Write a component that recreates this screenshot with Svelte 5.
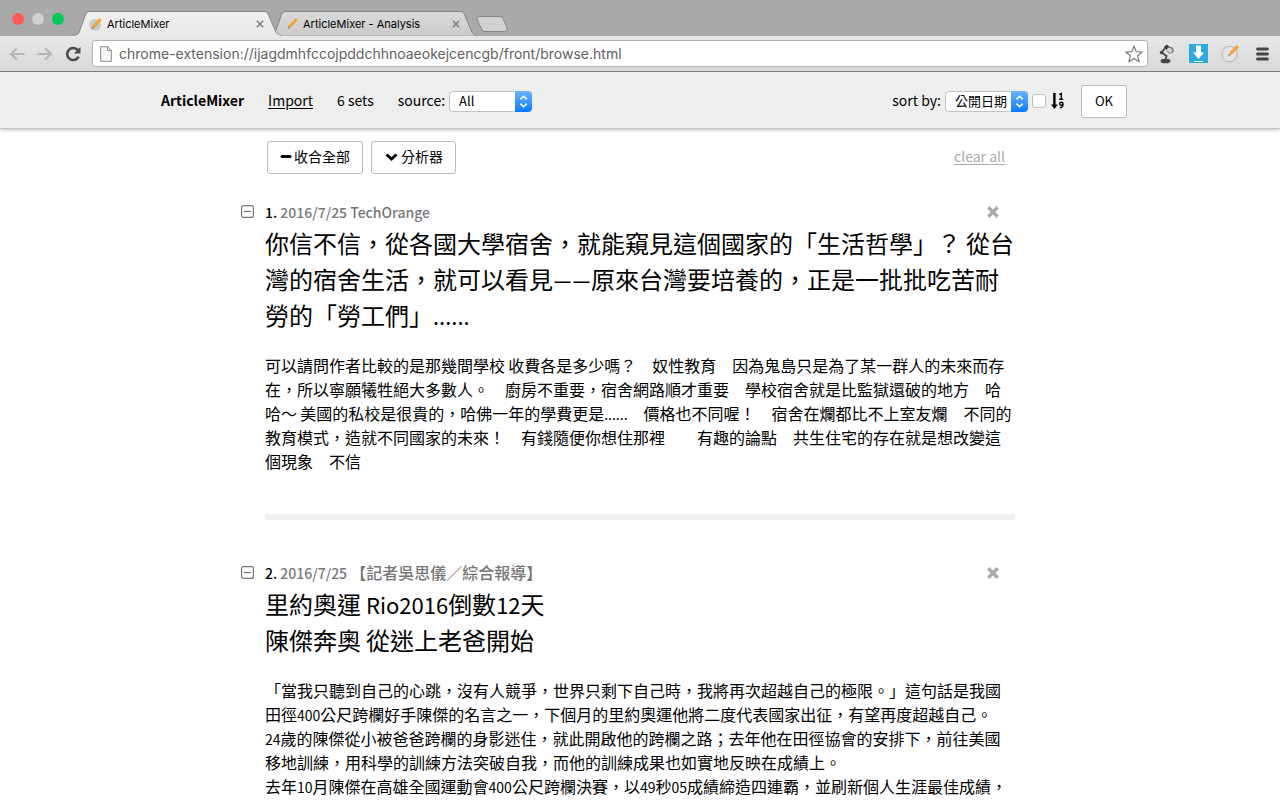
<script>
  const tabs = [
    { title: 'ArticleMixer', active: true },
    { title: 'ArticleMixer - Analysis', active: false }
  ];

  const articles = [
    {
      id: 1,
      date: '2016/7/25',
      source: 'TechOrange',
      title:
        '你信不信，從各國大學宿舍，就能窺見這個國家的「生活哲學」？ 從台灣的宿舍生活，就可以看見——原來台灣要培養的，正是一批批吃苦耐勞的「勞工們」......',
      body:
        '可以請問作者比較的是那幾間學校 收費各是多少嗎？　奴性教育　因為鬼島只是為了某一群人的未來而存在，所以寧願犧牲絕大多數人。　廚房不重要，宿舍網路順才重要　學校宿舍就是比監獄還破的地方　哈哈～ 美國的私校是很貴的，哈佛一年的學費更是......　價格也不同喔！　宿舍在爛都比不上室友爛　不同的教育模式，造就不同國家的未來！　有錢隨便你想住那裡　　有趣的論點　共生住宅的存在就是想改變這個現象　不信'
    },
    {
      id: 2,
      date: '2016/7/25',
      source: '【記者吳思儀／綜合報導】',
      title: '里約奧運 Rio2016倒數12天\n陳傑奔奧 從迷上老爸開始',
      body:
        '「當我只聽到自己的心跳，沒有人競爭，世界只剩下自己時，我將再次超越自己的極限。」這句話是我國田徑400公尺跨欄好手陳傑的名言之一，下個月的里約奧運他將二度代表國家出征，有望再度超越自己。\n24歲的陳傑從小被爸爸跨欄的身影迷住，就此開啟他的跨欄之路；去年他在田徑協會的安排下，前往美國移地訓練，用科學的訓練方法突破自我，而他的訓練成果也如實地反映在成績上。\n去年10月陳傑在高雄全國運動會400公尺跨欄決賽，以49秒05成績締造四連霸，並刷新個人生涯最佳成績，'
    }
  ];

  // Latin runs and dashes are set apart so that they sit well beside the Chinese glyphs.
  const runs = (text) =>
    text
      .split(/([\x20-\x7e]+|—+)/)
      .filter(Boolean)
      .map((t) => ({ t, kind: /^—/.test(t) ? 'dash' : /^[\x20-\x7e]/.test(t) ? 'latin' : '' }));
</script>

{#snippet mixed(text)}{#each runs(text) as r}{#if r.kind}<span class={r.kind}>{r.t}</span>{:else}{r.t}{/if}{/each}{/snippet}

{#snippet pencil(disc)}
  <svg class="fav" viewBox="0 0 16 16" aria-hidden="true">
    {#if disc}<circle cx="7" cy="9" r="6" fill="#c9c9c9" />{/if}
    <path d="M5 11.3 12.6 3.2" stroke="#f9a12e" stroke-width="3" />
    <path d="m3.6 12.8.7-2.6 2 1.9z" fill="#8b8b8b" />
  </svg>
{/snippet}

{#snippet stepper()}
  <svg class="stepper" viewBox="0 0 17 21" aria-hidden="true">
    <path d="M0 0h13a4 4 0 0 1 4 4v13a4 4 0 0 1-4 4H0z" fill="url(#blue)" />
    <path d="m5.3 8.4 3.2-3.2 3.2 3.2M5.3 12.6l3.2 3.2 3.2-3.2" fill="none" stroke="#fff" stroke-width="1.5" />
  </svg>
{/snippet}

<div class="window">
  <svg class="defs" width="0" height="0" aria-hidden="true">
    <defs>
      <linearGradient id="blue" x1="0" y1="0" x2="0" y2="1"><stop offset="0" stop-color="#6cb3fa" /><stop offset="1" stop-color="#0a7bff" /></linearGradient>
      <linearGradient id="tabOn" x1="0" y1="0" x2="0" y2="1"><stop offset="0" stop-color="#f0f0f0" /><stop offset="1" stop-color="#e8e8e8" /></linearGradient>
      <linearGradient id="tabOff" x1="0" y1="0" x2="0" y2="1"><stop offset="0" stop-color="#dadada" /><stop offset="1" stop-color="#cbcbcb" /></linearGradient>
    </defs>
  </svg>

  <div class="tabstrip">
    <div class="lights"><i class="red"></i><i class="grey"></i><i class="green"></i></div>
    {#each tabs as tab}
      <div class="tab" class:active={tab.active}>
        <svg class="shape" viewBox="0 0 206 25" preserveAspectRatio="none" aria-hidden="true">
          <path
            d="M0 24.5C3 24 4 22 5 19L10 5C11 2 12 .5 15 .5H189C192 .5 193 2 194 5L200 19C201 22 203 24 206 24.5"
            fill={tab.active ? 'url(#tabOn)' : 'url(#tabOff)'}
            stroke="#858585"
          />
          {#if tab.active}<path d="M1 24.5H205" stroke="#e8e8e8" />{/if}
        </svg>
        {@render pencil(tab.active)}
        <span class="tabname">{tab.title}</span>
        <button class="tabclose" aria-label="Close tab">
          <svg viewBox="0 0 8 8"><path d="m.8.8 6.4 6.4M7.2.8.8 7.2" stroke="#777" stroke-width="1.4" /></svg>
        </button>
      </div>
    {/each}
    <button class="newtab" aria-label="New tab">
      <svg viewBox="0 0 32 16"><path d="M3 .5H24Q26.500.5 27.500 3L31 12.500Q32 15.500 29 15.500H9Q6.500 15.500 5.500 13L1 3Q0 .5 3 .5z" fill="#d2d2d2" stroke="#858585" /></svg>
    </button>
  </div>

  <div class="toolbar">
    <button aria-label="Back"><svg width="16" height="14" viewBox="0 0 16 14"><path d="M15.500 7H2M8 1.200 2 7l6 5.800" fill="none" stroke="#b5b5b5" stroke-width="2.200" /></svg></button>
    <button aria-label="Forward"><svg width="16" height="14" viewBox="0 0 16 14"><path d="M.5 7H14M8 1.200 14 7l-6 5.800" fill="none" stroke="#b5b5b5" stroke-width="2.200" /></svg></button>
    <button aria-label="Reload">
      <svg width="16" height="16" viewBox="0 0 16 16"><path d="M12.800 4.200A6 6 0 1 0 13.600 10.600" fill="none" stroke="#4c4c4c" stroke-width="2.600" /><path d="M15.500.8V7.500H8.800z" fill="#4c4c4c" /></svg>
    </button>
    <div class="omnibox">
      <svg width="12" height="16" viewBox="0 0 12 16" aria-hidden="true"><path d="M.7.700H7.500L11.300 4.500V15.300H.7z" fill="#f6f6f6" stroke="#8a8a8a" /><path d="M7.500.700V4.500H11.300" fill="none" stroke="#8a8a8a" /></svg>
      <input class="url" aria-label="Address" value="chrome-extension://ijagdmhfccojpddchhnoaeokejcencgb/front/browse.html" />
      <button aria-label="Bookmark"><svg width="18" height="18" viewBox="0 0 18 18"><path d="m9 1 2.200 5.600 6 .4-4.600 3.800 1.500 5.900L9 13.400l-5.100 3.300 1.500-5.900L.8 7l6-.4z" fill="#fff" stroke="#7a7a7a" stroke-width="1.200" stroke-linejoin="round" /></svg></button>
    </div>
    <div class="extensions">
      <button aria-label="Lamp">
        <svg width="18" height="20" viewBox="0 0 18 20"><ellipse cx="7.500" cy="17" rx="5" ry="2.300" fill="#444" /><path d="M7.500 16 8.500 12 3.500 8.500 8 3" fill="none" stroke="#555" stroke-width="2" /><circle cx="3.500" cy="8.500" r="1.700" fill="#444" /><path d="M6 2.500 9 .8l3 2c3 .3 4.500 2.500 3.500 5-1 1.800-3.500 2.200-5.500.7C8 6.500 8.500 5 7 4.500z" fill="#777" /><ellipse cx="11.500" cy="6" rx="3.200" ry="2" transform="rotate(35 11.500 6)" fill="#d5d5d5" /><path d="m6 3 3-2.400L11 3 8.500 5.500z" fill="#3d3d3d" /></svg>
      </button>
      <button aria-label="Download">
        <svg width="19" height="19" viewBox="0 0 19 19"><path d="M0 0h19v19H0z" fill="#2ea9de" /><path d="M7 1.500h5v7H15L9.500 15 4 8.500h3z" fill="#fff" /><path d="M5 17.500h9" stroke="#fff" /></svg>
      </button>
      <button aria-label="ArticleMixer">
        <svg width="19" height="19" viewBox="0 0 19 19"><circle cx="8.500" cy="10" r="7.800" fill="#e4e4e4" stroke="#b0b0b0" /><path d="m9 10 8.100-8" stroke="#f9a343" stroke-width="3.200" /><path d="m6.600 12.500 1.300-3.200 2 1.800z" fill="#999" /></svg>
      </button>
      <button class="menu" aria-label="Menu"><svg width="13" height="14" viewBox="0 0 13 14"><path d="M1.700 2h9.600M1.700 7h9.600M1.700 12h9.600" stroke="#444" stroke-width="3.200" stroke-linecap="round" /></svg></button>
    </div>
  </div>

  <div class="page">
    <header>
      <div class="bar">
        <strong>ArticleMixer</strong>
        <a class="import" href="#import">Import</a>
        <span>6 sets</span>
        <div class="field">
          <label for="source">source:</label>
          <span class="pick"><select id="source"><option>All</option></select>{@render stepper()}</span>
        </div>
        <div class="field sort">
          <label for="sort">sort by:</label>
          <span class="pick"><select id="sort"><option>公開日期</option></select>{@render stepper()}</span>
          <span class="order">
            <input type="checkbox" aria-label="Ascending" />
            <svg width="14" height="18" viewBox="0 0 14 18" aria-hidden="true">
              <path d="M2.200 1h2.400v11.500h2.200L3.400 17 0 12.500h2.200z" />
              <path d="M8.300 2.600 10.300 1.500V7M8.200 7.200h4" fill="none" stroke="#000" stroke-width="1.400" />
              <path d="M12 11.700a1.700 1.500 0 1 1-3.400 0 1.700 1.500 0 0 1 3.400 0q.4 3.800-3.200 4" fill="none" stroke="#000" stroke-width="1.400" />
            </svg>
          </span>
        </div>
        <button class="btn">OK</button>
      </div>
    </header>

    <main>
      <div class="actions">
        <button class="btn"><svg width="12" height="12" viewBox="0 0 12 12" aria-hidden="true"><path d="M2 6.500h8" stroke="#000" stroke-width="3" stroke-linecap="round" /></svg>收合全部</button>
        <button class="btn"><svg width="15" height="12" viewBox="0 0 15 12" aria-hidden="true"><path d="m2.500 4.500 5 4.500 5-4.500" fill="none" stroke="#000" stroke-width="3" /></svg>分析器</button>
        <a class="clear" href="#clear">clear all</a>
      </div>

      {#each articles as a}
        <article>
          <div class="meta">
            <button class="fold" aria-label="Collapse">
              <svg width="13" height="13" viewBox="0 0 13 13"><rect x=".6" y=".6" width="11.800" height="11.800" rx="2" fill="none" stroke="#777" stroke-width="1.200" /><path d="M3 6.500h7" stroke="#777" stroke-width="1.200" /></svg>
            </button>
            <p><span class="latin num">{a.id}.</span>{@render mixed(' ' + a.date + ' ' + a.source)}</p>
            <button class="remove" aria-label="Remove">
              <svg width="12" height="14" viewBox="0 0 12 14"><path d="m2.500 4.500 7 7M9.500 4.500l-7 7" stroke="#aaa" stroke-width="3.400" stroke-linecap="square" /></svg>
            </button>
          </div>
          <h2>{@render mixed(a.title)}</h2>
          <p class="body">{@render mixed(a.body)}</p>
        </article>
      {/each}
    </main>
  </div>
</div>

<style>
  :global(body) {
    margin: 0;
    background: #fff;
  }
  .window {
    height: 100vh;
    display: flex;
    flex-direction: column;
    overflow: hidden;
    color: #000;
    font-family: 'Noto Sans CJK TC', sans-serif;
    font-size: 14px;
    text-spacing-trim: space-all;
  }
  .defs {
    position: absolute;
  }
  svg {
    display: block;
    flex: none;
  }
  button {
    padding: 0;
    border: 0;
    background: none;
    font: inherit;
    color: inherit;
  }
  p,
  h2 {
    margin: 0;
  }

  .tabstrip {
    flex: none;
    height: 36px;
    box-sizing: border-box;
    display: flex;
    align-items: flex-end;
    background: #a9a9a9;
    font-family: Inter, sans-serif;
    font-size: 11px;
  }
  .lights {
    display: flex;
    gap: 8px;
    padding: 0 11px 11px 12px;
  }
  .lights i {
    width: 12px;
    height: 12px;
    border-radius: 50%;
  }
  .red {
    background: #fc5b57;
  }
  .grey {
    background: #d0d0d0;
  }
  .green {
    background: #00c956;
  }
  .tab {
    position: relative;
    width: 206px;
    height: 25px;
    box-sizing: border-box;
    display: flex;
    align-items: center;
    padding: 0 17px 0 13px;
    margin-right: -10px;
  }
  .tab.active {
    z-index: 1;
  }
  .shape {
    position: absolute;
    inset: 0;
    width: 100%;
    height: 100%;
  }
  .fav {
    position: relative;
    width: 16px;
    height: 16px;
    margin-right: 3px;
  }
  .tabname {
    position: relative;
    flex: 1;
    white-space: nowrap;
  }
  .tabclose {
    position: relative;
  }
  .tabclose svg {
    width: 8px;
    height: 8px;
  }
  .newtab {
    margin: 0 0 4px 9px;
  }
  .newtab svg {
    width: 32px;
    height: 16px;
  }

  .toolbar {
    flex: none;
    height: 36px;
    box-sizing: border-box;
    display: flex;
    align-items: center;
    gap: 12px;
    padding: 0 11px 0 9px;
    background: linear-gradient(#e8e8e8, #d8d8d8);
    border-bottom: 1px solid #7b7b7b;
  }
  .omnibox {
    flex: 1;
    height: 27px;
    box-sizing: border-box;
    display: flex;
    align-items: center;
    gap: 7px;
    padding: 0 4px 0 7px;
    background: #fff;
    border: 1px solid #b4b4b4;
    border-radius: 3px;
    margin-left: -1px;
  }
  .url {
    flex: 1;
    min-width: 0;
    padding: 0;
    border: 0;
    outline: 0;
    background: none;
    color: #5f5f5f;
    font-family: Inter, sans-serif;
    font-size: 14px;
  }
  .extensions {
    display: flex;
    align-items: center;
    gap: 13px;
    margin-left: -2px;
  }
  .menu {
    margin-left: 3px;
  }

  .page {
    flex: 1;
    min-height: 0;
    overflow-y: auto;
    scrollbar-width: none;
  }
  header {
    background: #eee;
    border-bottom: 1px solid #c4c4c4;
    box-shadow: 0 1px 4px rgba(0, 0, 0, 0.25);
  }
  .bar {
    max-width: 974px;
    height: 56px;
    margin: 0 auto;
    padding: 2px 0 0 8px;
    box-sizing: border-box;
    display: flex;
    align-items: center;
    gap: 24px;
    line-height: 20px;
  }
  .bar > strong,
  .bar > a,
  .bar > span,
  .field > label {
    padding-bottom: 2px;
  }
  a {
    color: inherit;
    text-underline-offset: 2px;
  }
  .field {
    display: flex;
    align-items: center;
    gap: 4px;
  }
  .sort {
    margin-left: auto;
  }
  .bar .btn {
    margin-left: -8px;
    padding: 0 13px;
    font-size: 13px;
  }
  .pick {
    position: relative;
    display: inline-flex;
  }
  .pick select {
    appearance: none;
    width: 83px;
    height: 21px;
    padding: 0 20px 0 9px;
    border: 1px solid #c2c2c2;
    border-radius: 4px;
    background: #fff;
    color: #000;
    font-family: inherit;
    font-size: 13px;
    line-height: 18px;
  }
  .stepper {
    position: absolute;
    top: 0;
    right: 0;
    width: 17px;
    height: 21px;
    pointer-events: none;
  }
  .order {
    display: flex;
    align-items: center;
    gap: 5px;
  }
  .order input {
    appearance: none;
    width: 14px;
    height: 14px;
    margin: 0;
    border: 1px solid #bbb;
    border-radius: 3px;
    background: #fff;
  }
  .btn {
    height: 33px;
    display: flex;
    align-items: center;
    gap: 2px;
    padding: 0 12px 3px;
    border: 1px solid #bbb;
    border-radius: 3px;
    background: #fff;
    font-size: 14px;
  }

  main {
    max-width: 750px;
    margin: 0 auto;
    padding: 12px 24px 0;
  }
  .actions {
    display: flex;
    align-items: center;
    gap: 8px;
    padding: 0 10px 0 2px;
    margin-bottom: 25px;
  }
  .clear {
    margin-left: auto;
    padding-bottom: 3px;
    color: #aaa;
  }
  article + article {
    margin-top: 41px;
    padding-top: 40px;
    border-top: 6px solid #eee;
  }
  .meta {
    display: flex;
    align-items: center;
    margin-left: -24px;
    padding-right: 16px;
    margin-bottom: 2px;
    font-size: 16px;
    line-height: 24px;
    font-weight: 500;
    color: #777;
  }
  .meta p {
    flex: 1;
  }
  .fold {
    width: 24px;
  }
  .latin {
    font-size: 14px;
    line-height: 1;
  }
  .num {
    color: #000;
  }
  h2 {
    font-size: 24px;
    line-height: 36px;
    font-weight: 400;
    white-space: pre-line;
  }
  h2 .latin {
    font-size: 22px;
  }
  .dash {
    font-family: Lato, sans-serif;
    line-height: 1;
  }
  .body {
    margin-top: 20px;
    font-size: 16px;
    line-height: 24px;
    white-space: pre-line;
  }
</style>
